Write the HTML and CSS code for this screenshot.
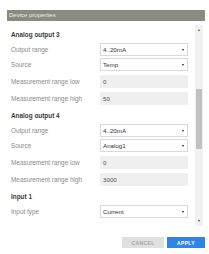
FILE: index.html
```html
<!DOCTYPE html>
<html lang="en">
<head>
  <meta charset="UTF-8">
  <title>Device properties</title>
  <link rel="stylesheet" href="styles.css">
</head>
<body>
  <div class="dialog">
    <div class="dialog-title">Device properties</div>

    <div class="dialog-body">
      <div class="fields">
        <h3 class="group-title">Analog output 3</h3>
        <div class="row row-select">
          <span class="label">Output range</span>
          <div class="select"><span>4..20mA</span><i class="caret"></i></div>
        </div>
        <div class="row row-select">
          <span class="label">Source</span>
          <div class="select"><span>Temp</span><i class="caret"></i></div>
        </div>
        <div class="row row-input">
          <span class="label">Measurement range low</span>
          <div class="input">0</div>
        </div>
        <div class="row row-input">
          <span class="label">Measurement range high</span>
          <div class="input">50</div>
        </div>

        <h3 class="group-title">Analog output 4</h3>
        <div class="row row-select">
          <span class="label">Output range</span>
          <div class="select"><span>4..20mA</span><i class="caret"></i></div>
        </div>
        <div class="row row-select">
          <span class="label">Source</span>
          <div class="select"><span>Analog1</span><i class="caret"></i></div>
        </div>
        <div class="row row-input">
          <span class="label">Measurement range low</span>
          <div class="input">0</div>
        </div>
        <div class="row row-input">
          <span class="label">Measurement range high</span>
          <div class="input">3000</div>
        </div>

        <h3 class="group-title">Input 1</h3>
        <div class="row row-select">
          <span class="label">Input type</span>
          <div class="select"><span>Current</span><i class="caret"></i></div>
        </div>
      </div>

      <!-- fake scrollbar -->
      <div class="scrollbar">
        <div class="sb-btn"><i class="arrow-up"></i></div>
        <div class="sb-track"><div class="sb-thumb"></div></div>
        <div class="sb-btn"><i class="arrow-down"></i></div>
      </div>
    </div>

    <div class="dialog-actions">
      <button class="btn btn-disabled">CANCEL</button>
      <button class="btn btn-primary">APPLY</button>
    </div>
  </div>
</body>
</html>
```

FILE: styles.css
```css
* {
  margin: 0;
  padding: 0;
  box-sizing: border-box;
}

body {
  background: white;
  font-family: 'Liberation Sans', Arial, sans-serif;
  color: #333;
}

/* Dialog */
.dialog {
  width: 198px;
  margin: 10px 0 0 7px;
}

.dialog-title {
  height: 11px;
  line-height: 11px;
  padding-left: 2px;
  background: #8a8a83;
  color: #ececec;
  font-size: 6px;
}

.dialog-body {
  display: flex;
  height: 201px;
  margin-top: 4px;
  overflow: hidden;
}

.fields {
  flex: 1;
  padding: 5px 7px 0 4px;
}

.group-title {
  height: 10px;
  line-height: 10px;
  font-size: 6.4px;
  font-weight: bold;
  color: #3a3a3a;
  margin-bottom: 3px;
}

.row + .group-title {
  margin-top: 6px;
}

.row {
  display: flex;
  align-items: center;
  height: 13px;
}

.row-select {
  margin-bottom: 2px;
}

.row-input {
  margin-top: 4px;
  margin-bottom: 2px;
}

.label {
  width: 89px;
  font-size: 6.4px;
  color: #8a8a8a;
}

.select {
  width: 88px;
  height: 13px;
  display: flex;
  align-items: center;
  justify-content: space-between;
  padding: 0 3px 0 2px;
  border: 1px solid #dadada;
  background: white;
  font-size: 6.2px;
  color: #333;
}

.caret {
  width: 0;
  height: 0;
  border-left: 1.5px solid transparent;
  border-right: 1.5px solid transparent;
  border-top: 2px solid #222;
}

.input {
  width: 88px;
  height: 13px;
  line-height: 13px;
  padding-left: 3px;
  background: #efefef;
  font-size: 6.2px;
  color: #555;
}

/* Scrollbar */
.scrollbar {
  width: 8px;
  margin-right: 2px;
  display: flex;
  flex-direction: column;
  background: #f1f1f1;
}

.sb-btn {
  height: 10px;
  display: flex;
  align-items: center;
  justify-content: center;
}

.arrow-up {
  border-left: 1.5px solid transparent;
  border-right: 1.5px solid transparent;
  border-bottom: 2px solid #505050;
}

.arrow-down {
  border-left: 1.5px solid transparent;
  border-right: 1.5px solid transparent;
  border-top: 2px solid #505050;
}

.sb-track {
  flex: 1;
  padding: 54px 1px 0 1px;
}

.sb-thumb {
  height: 60px;
  background: #c1c1c1;
}

/* Footer buttons */
.dialog-actions {
  display: flex;
  justify-content: flex-end;
  gap: 3px;
  margin-top: 11px;
}

.btn {
  height: 11px;
  border: none;
  font-family: 'Liberation Sans', Arial, sans-serif;
  font-size: 5px;
  font-weight: bold;
  letter-spacing: 0.4px;
  cursor: pointer;
}

.btn-disabled {
  width: 42px;
  background: #e0e0e0;
  color: #a5a5a5;
}

.btn-primary {
  width: 38px;
  background: #2f84e6;
  color: white;
}
```
